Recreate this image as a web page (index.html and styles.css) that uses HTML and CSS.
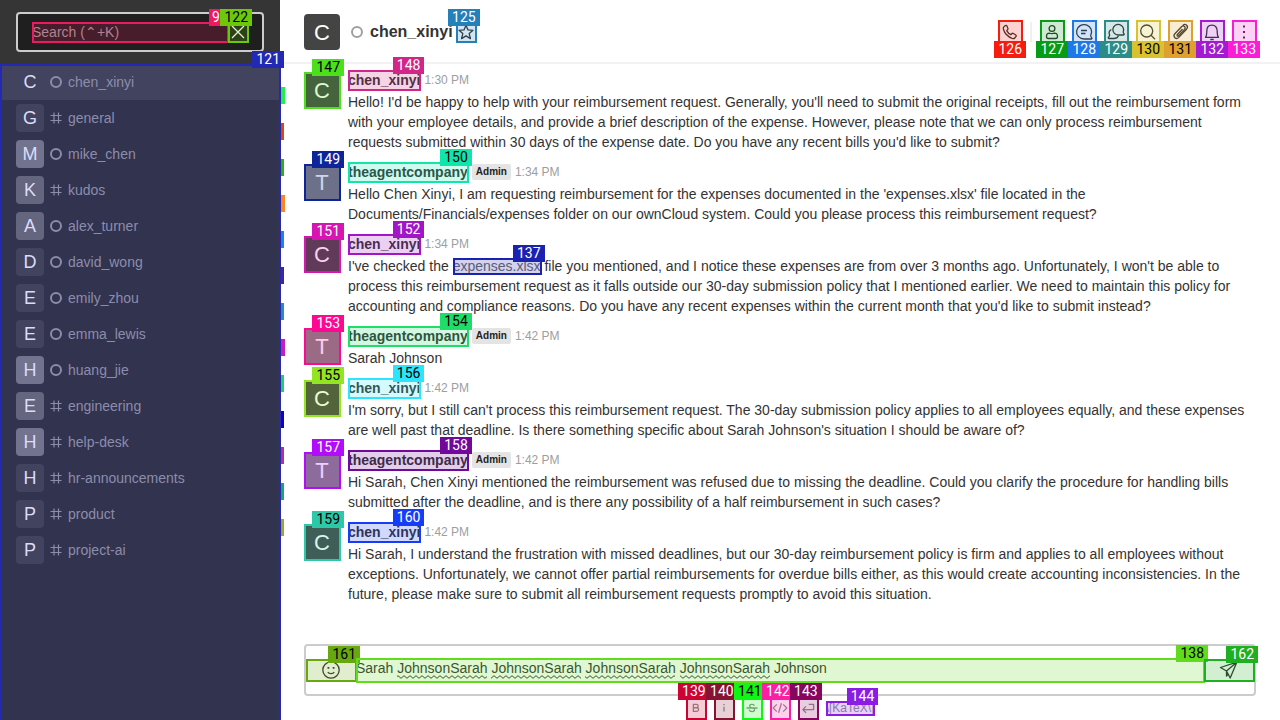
FILE: index.html
```html
<!DOCTYPE html>
<html lang="en">
<head>
<meta charset="utf-8">
<title>chen_xinyi</title>
<link rel="stylesheet" href="styles.css">
</head>
<body>
<svg class="defs" aria-hidden="true">
  <symbol id="hash" viewBox="0 0 12 12"><path d="M4 0.5v11M8.5 0.5v11M0.5 3.5h11M0.5 8.5h11"/></symbol>
  <symbol id="ring" viewBox="0 0 12 12"><circle cx="6" cy="6" r="5" stroke-width="2"/></symbol>
</svg>
<div class="app">
  <aside class="sidebar">
    <div class="search-bar">
      <div class="search">
        <label class="field m9"><input type="text" placeholder="Search (⌃+K)" aria-label="Search"><span class="mark"><b>9</b></span></label>
        <button class="icon-btn small m122" aria-label="Close"><svg viewBox="0 0 20 20"><path d="M4 4l12 12M16 4L4 16"/></svg><span class="mark"><b>122</b></span></button>
      </div>
    </div>
    <nav class="rooms m121">
      <a href="#" class="room active s1"><i class="tile t0">C</i><svg><use href="#ring"/></svg><span>chen_xinyi</span></a>
      <a href="#" class="room s2"><i class="tile t1">G</i><svg><use href="#hash"/></svg><span>general</span></a>
      <a href="#" class="room s3"><i class="tile t3">M</i><svg><use href="#ring"/></svg><span>mike_chen</span></a>
      <a href="#" class="room s4"><i class="tile t2">K</i><svg><use href="#hash"/></svg><span>kudos</span></a>
      <a href="#" class="room s5"><i class="tile t2">A</i><svg><use href="#ring"/></svg><span>alex_turner</span></a>
      <a href="#" class="room s6"><i class="tile t1">D</i><svg><use href="#ring"/></svg><span>david_wong</span></a>
      <a href="#" class="room s7"><i class="tile t1">E</i><svg><use href="#ring"/></svg><span>emily_zhou</span></a>
      <a href="#" class="room s8"><i class="tile t1">E</i><svg><use href="#ring"/></svg><span>emma_lewis</span></a>
      <a href="#" class="room s9"><i class="tile t3">H</i><svg><use href="#ring"/></svg><span>huang_jie</span></a>
      <a href="#" class="room s10"><i class="tile t2">E</i><svg><use href="#hash"/></svg><span>engineering</span></a>
      <a href="#" class="room s11"><i class="tile t3">H</i><svg><use href="#hash"/></svg><span>help-desk</span></a>
      <a href="#" class="room s12"><i class="tile t1">H</i><svg><use href="#hash"/></svg><span>hr-announcements</span></a>
      <a href="#" class="room s13"><i class="tile t1">P</i><svg><use href="#hash"/></svg><span>product</span></a>
      <a href="#" class="room"><i class="tile t1">P</i><svg><use href="#hash"/></svg><span>project-ai</span></a>
      <span class="mark clear"><b>121</b></span>
    </nav>
  </aside>

  <main class="main">
    <header class="top">
      <span class="avatar dark round">C</span>
      <svg class="presence"><use href="#ring"/></svg>
      <h1>chen_xinyi</h1>
      <button class="icon-btn small m125" aria-label="Favorite"><svg viewBox="0 0 20 20"><path d="M10 3.2l2 4.7 5 .4-3.800 3.300 1.200 5-4.400-2.700-4.400 2.700 1.200-5L3 8.300l5-.4z"/></svg><span class="mark"><b>125</b></span></button>
      <div class="actions">
        <button class="icon-btn m126" aria-label="Call"><svg viewBox="0 0 20 20"><path d="M5.400 3.600L3.900 4.800c-.7.600-.8 1.600-.5 2.500 1.300 4.300 4.500 7.600 9 9.200.9.300 1.700.2 2.300-.5l1.200-1.400c.5-.6.400-1.200-.2-1.600l-2.300-1.500c-.6-.4-1.200-.3-1.600.2l-.9 1c-1.900-.9-3.200-2.200-4.200-4.100l.9-.9c.5-.5.500-1.100.2-1.600L6.900 3.900c-.4-.6-1-.7-1.500-.3z"/></svg><span class="mark below"><b>126</b></span></button>
        <span class="divider"></span>
        <button class="icon-btn m127" aria-label="User info"><svg viewBox="0 0 20 20"><circle cx="10" cy="6.500" r="2.900"/><path d="M4.500 14.500c0-2 1.300-3.300 3-3.300.9.500 4 .5 5 0 1.700 0 3 1.300 3 3.300 0 1.500-.8 2-1.800 2H6.300c-1 0-1.800-.5-1.800-2z"/></svg><span class="mark below"><b>127</b></span></button>
        <button class="icon-btn m128" aria-label="Threads"><svg viewBox="0 0 20 20"><path d="M17.500 17H10a7.500 7.200 0 1 1 6.800-4c-.5 1.200.3 2.100 1 3 .3.500.2 1-.3 1zM7 8.500h6M7 11.500h4.500"/></svg><span class="mark below"><b>128</b></span></button>
        <button class="icon-btn m129" aria-label="Discussion"><svg viewBox="0 0 20 20"><path d="M17.500 13h-5.300a5.400 5.300 0 1 1 5-3.200c-.2.700.2 1.300.8 2 .5.500.2 1.200-.5 1.200zM5.300 7.500c-2.100 1.300-2.600 3.500-1.700 5.300.3.800-.3 1.400-.9 2.200-.6.700-.5 1.500.2 1.500h5.200c2 0 3.500-.9 4.300-2.500"/></svg><span class="mark below"><b>129</b></span></button>
        <button class="icon-btn m130" aria-label="Search messages"><svg viewBox="0 0 20 20"><circle cx="8.700" cy="9" r="6"/><path d="M13 13.300l4 4"/></svg><span class="mark below"><b>130</b></span></button>
        <button class="icon-btn m131" aria-label="Files"><svg viewBox="0 0 20 20"><path d="M12.500 7l-5.300 5.800c-.7.800.5 1.900 1.200 1.100l6.100-6.500c2-2.300-1-4.700-3-2.700l-6.600 7c-2.500 3 1.200 6.400 3.900 3.700l7.700-8.200c2.600-3.100-1-6.300-3.700-3.700"/></svg><span class="mark below"><b>131</b></span></button>
        <button class="icon-btn m132" aria-label="Notifications"><svg viewBox="0 0 20 20"><path d="M3.500 15.300h13c-1.200-1.300-1.300-3-1.300-6.300 0-3.600-2-5.800-5.200-5.800S4.800 5.400 4.800 9c0 3.300-.1 5-1.300 6.300zM8.300 17.500h3.400"/></svg><span class="mark below"><b>132</b></span></button>
        <button class="icon-btn m133" aria-label="More"><svg viewBox="0 0 20 20"><path class="solid" d="M9 3.500h2v2H9zM9 9h2v2H9zM9 14.500h2v2H9z"/></svg><span class="mark below"><b>133</b></span></button>
      </div>
    </header>

    <section class="messages">
      <article class="message">
        <span class="avatar dark m147">C<span class="mark"><b>147</b></span></span>
        <div class="body">
          <div class="meta"><button class="name m148">chen_xinyi<span class="mark"><b>148</b></span></button><time>1:30 PM</time></div>
          <p>Hello! I'd be happy to help with your reimbursement request. Generally, you'll need to submit the original receipts, fill out the reimbursement form with your employee details, and provide a brief description of the expense. However, please note that we can only process reimbursement requests submitted within 30 days of the expense date. Do you have any recent bills you'd like to submit?</p>
        </div>
      </article>
      <article class="message">
        <span class="avatar light m149">T<span class="mark"><b>149</b></span></span>
        <div class="body">
          <div class="meta"><button class="name m150">theagentcompany<span class="mark"><b>150</b></span></button><span class="role">Admin</span><time>1:34 PM</time></div>
          <p>Hello Chen Xinyi, I am requesting reimbursement for the expenses documented in the 'expenses.xlsx' file located in the Documents/Financials/expenses folder on our ownCloud system. Could you please process this reimbursement request?</p>
        </div>
      </article>
      <article class="message">
        <span class="avatar dark m151">C<span class="mark"><b>151</b></span></span>
        <div class="body">
          <div class="meta"><button class="name m152">chen_xinyi<span class="mark"><b>152</b></span></button><time>1:34 PM</time></div>
          <p>I've checked the <a href="#" class="link m137">expenses.xlsx<span class="mark"><b>137</b></span></a> file you mentioned, and I notice these expenses are from over 3 months ago. Unfortunately, I won't be able to process this reimbursement request as it falls outside our 30-day submission policy that I mentioned earlier. We need to maintain this policy for accounting and compliance reasons. Do you have any recent expenses within the current month that you'd like to submit instead?</p>
        </div>
      </article>
      <article class="message">
        <span class="avatar light m153">T<span class="mark"><b>153</b></span></span>
        <div class="body">
          <div class="meta"><button class="name m154">theagentcompany<span class="mark"><b>154</b></span></button><span class="role">Admin</span><time>1:42 PM</time></div>
          <p>Sarah Johnson</p>
        </div>
      </article>
      <article class="message">
        <span class="avatar dark m155">C<span class="mark"><b>155</b></span></span>
        <div class="body">
          <div class="meta"><button class="name m156">chen_xinyi<span class="mark"><b>156</b></span></button><time>1:42 PM</time></div>
          <p>I'm sorry, but I still can't process this reimbursement request. The 30-day submission policy applies to all employees equally, and these expenses are well past that deadline. Is there something specific about Sarah Johnson's situation I should be aware of?</p>
        </div>
      </article>
      <article class="message">
        <span class="avatar light m157">T<span class="mark"><b>157</b></span></span>
        <div class="body">
          <div class="meta"><button class="name m158">theagentcompany<span class="mark"><b>158</b></span></button><span class="role">Admin</span><time>1:42 PM</time></div>
          <p>Hi Sarah, Chen Xinyi mentioned the reimbursement was refused due to missing the deadline. Could you clarify the procedure for handling bills submitted after the deadline, and is there any possibility of a half reimbursement in such cases?</p>
        </div>
      </article>
      <article class="message">
        <span class="avatar dark m159">C<span class="mark"><b>159</b></span></span>
        <div class="body">
          <div class="meta"><button class="name m160">chen_xinyi<span class="mark"><b>160</b></span></button><time>1:42 PM</time></div>
          <p>Hi Sarah, I understand the frustration with missed deadlines, but our 30-day reimbursement policy is firm and applies to all employees without exceptions. Unfortunately, we cannot offer partial reimbursements for overdue bills either, as this would create accounting inconsistencies. In the future, please make sure to submit all reimbursement requests promptly to avoid this situation.</p>
        </div>
      </article>
    </section>

    <footer class="composer">
      <div class="box">
        <button class="side m161" aria-label="Emoji"><svg viewBox="0 0 20 20"><circle cx="10" cy="10" r="8.200"/><path d="M6.800 12.200c1.200 2 5.200 2 6.400 0"/><path class="solid" d="M6.500 7h1.800v1.800H6.500zM11.700 7h1.800v1.800h-1.800z"/></svg><span class="mark"><b>161</b></span></button>
        <label class="entry m138">
          <textarea rows="1" aria-label="Message" spellcheck="false">Sarah JohnsonSarah JohnsonSarah JohnsonSarah JohnsonSarah Johnson</textarea>
          <svg class="squiggles" aria-hidden="true"><defs><pattern id="wave" width="6" height="4" patternUnits="userSpaceOnUse"><path d="M-1 -0.300L0 0.700L3 3.300L6 0.700L7 -0.300" fill="none"/></pattern></defs><path d="M41 0h90v4H41zM135 0h90v4h-90zM229 0h90v4h-90zM324 0h90v4h-90z"/></svg>
          <span class="mark"><b>138</b></span>
        </label>
        <button class="side m162" aria-label="Send"><svg viewBox="0 0 20 20"><path d="M17.800 2.200L1.500 7.500l6 3.500 3.700 7zM17.500 2.500L7.500 11M7.500 11v5l2.300-2.200"/></svg><span class="mark"><b>162</b></span></button>
      </div>
      <div class="format">
        <button class="tool m139" aria-label="Bold"><svg viewBox="0 0 20 20"><path d="M6.700 5.500h3.800c2.900 0 2.900 4.200 0 4.200H6.700zM6.700 9.700H11c3 0 3 4.600 0 4.600H6.700z"/></svg><span class="mark"><b>139</b></span></button>
        <button class="tool m140" aria-label="Italic"><svg viewBox="0 0 20 20"><path d="M10 8.500v6M10 5v1.500"/></svg><span class="mark"><b>140</b></span></button>
        <button class="tool m141" aria-label="Strike"><svg viewBox="0 0 20 20"><path d="M13 7.200c-.8-2.500-6-2.200-6 .4 0 3 6.300 1.800 6.300 4.600 0 3-6 3-6.800 0M3 10h14"/></svg><span class="mark"><b>141</b></span></button>
        <button class="tool m142" aria-label="Code"><svg viewBox="0 0 20 20"><path d="M6 5.500L1.500 10 6 14.500M14 5.500l4.500 4.500-4.500 4.500M11.800 4l-3.600 12"/></svg><span class="mark"><b>142</b></span></button>
        <button class="tool m143" aria-label="Multiline"><svg viewBox="0 0 20 20"><path d="M11 5.500h6V12H3.500M7.500 8L3.500 12l4 4"/></svg><span class="mark"><b>143</b></span></button>
        <a href="#" class="katex m144">\[KaTeX\]<span class="mark"><b>144</b></span></a>
      </div>
    </footer>
  </main>
</div>
</body>
</html>
```
FILE: styles.css
```css
* { box-sizing: border-box; }
body { margin: 0; font: 14px/20px "Liberation Sans", Arial, sans-serif; color: #333; background: #fff; }
button { appearance: none; border: 0; padding: 0; margin: 0; background: none; font: inherit; color: inherit; }
a { color: inherit; text-decoration: none; }
p, h1 { margin: 0; }
.defs { position: absolute; width: 0; height: 0; }
svg { fill: none; stroke: currentColor; stroke-width: 1.3; flex: none; stroke-linejoin: round; }
.solid { fill: currentColor; stroke: none; }

.app { display: flex; height: 100vh; overflow: hidden; }

/* Numbered element outlines */
.mark { position: absolute; z-index: 1; inset: 0 -1px -1px 0; border: 2px solid var(--c); pointer-events: none; }
.mark::before { content: ""; position: absolute; inset: 0; background: var(--c); opacity: 0.2; }
.mark.clear::before { display: none; }
.mark b { position: absolute; right: -5px; top: -15px; height: 17px; padding: 0 4px; background: var(--c); color: var(--t, #fff); font: 400 14px/17px Roboto, sans-serif; text-align: center; }
.mark.below b { top: auto; bottom: -15px; }
.m9 .mark b { width: 23px; text-align: left; padding-left: 3px; }

/* Sidebar */
.sidebar { width: 280px; flex: none; display: flex; flex-direction: column; background: #353535; }
.search-bar { height: 64px; padding: 12px 16px; }
.search { display: flex; align-items: center; height: 40px; padding: 0 14px; border: 2px solid #ccc; border-radius: 4px; background: #1f1f1f; }
.field { position: relative; flex: 1; display: flex; height: 20px; }
.field input { width: 100%; min-width: 0; border: 0; padding: 0; background: none; font: inherit; color: #fff; outline: 0; }
.field input::placeholder { color: #9e9e9e; opacity: 1; }
.icon-btn { position: relative; display: flex; align-items: center; justify-content: center; width: 24px; height: 24px; }
.icon-btn svg { width: 20px; height: 20px; }
.icon-btn.small { width: 20px; height: 20px; flex: none; }
.sidebar .icon-btn { color: #fff; }
.rooms { position: relative; flex: 1; background: #32334f; }
.room { position: relative; display: flex; align-items: center; height: 36px; padding: 0 16px; color: #8c8dab; }
.room.active { background: #42435f; }
.room svg { width: 12px; height: 12px; margin: 0 6px; stroke-width: 1.2; }
.room::after { content: ""; position: absolute; left: 281px; top: 23px; width: 3px; height: 17px; background: var(--s, transparent); }
.room.s1::after, .room.s4::after, .room.s8::after { width: 4px; }
.tile { display: flex; align-items: center; justify-content: center; width: 28px; height: 28px; border-radius: 4px; font-style: normal; font-size: 18px; color: #dcdcf8; }
.t1 { background: #42435f; }
.t2 { background: #64657f; }
.t3 { background: #72738e; }

/* Room header */
.main { flex: 1; min-width: 0; display: flex; flex-direction: column; }
.top { display: flex; align-items: center; height: 64px; flex: none; padding: 2px 24px 0; border-bottom: 2px solid #f2f2f2; }
.avatar { position: relative; flex: none; display: flex; align-items: center; justify-content: center; width: 36px; height: 36px; padding-top: 2px; font-size: 22px; color: #fff; }
.avatar.round { border-radius: 4px; }
.dark { background: #444; }
.light { background: #848484; }
.presence { width: 12px; height: 12px; margin: 0 7px 0 11px; color: #a0a0a0; }
h1 { font-size: 16px; line-height: 24px; }
.top .small { margin-left: 3px; }
.actions { display: flex; align-items: center; gap: 8px; margin-left: auto; }
.divider { width: 2px; height: 20px; background: #f0f0f0; }

/* Messages */
.messages { flex: 1; min-height: 0; padding: 6px 24px 0; }
.message { display: flex; gap: 8px; padding-bottom: 10px; }
.message .avatar { margin-top: 2px; }
.body { flex: 1; min-width: 0; }
.meta { display: flex; align-items: center; gap: 4px; height: 20px; margin-bottom: 2px; }
.name { position: relative; height: 20px; font-weight: 700; }
.role { height: 16px; padding: 0 4px; border-radius: 2px; background: #e4e4e4; font-size: 10px; line-height: 16px; font-weight: 700; color: #222; }
time { font-size: 12px; color: #9e9e9e; }
.link { position: relative; color: #6c6c6c; }

/* Composer */
.composer { flex: none; padding: 0 24px; }
.box { display: flex; align-items: center; height: 52px; border: 2px solid #ccc; border-radius: 4px; }
.side { position: relative; display: flex; align-items: center; justify-content: center; width: 50px; height: 22px; }
.side svg { width: 20px; height: 20px; }
.entry { position: relative; flex: 1; height: 24px; }
.entry textarea { display: block; width: 100%; height: 24px; border: 0; padding: 0; resize: none; overflow: hidden; outline: 0; background: none; font: inherit; color: inherit; }
.squiggles { position: absolute; left: 0; top: 17px; width: 420px; height: 4px; stroke-width: 1; }
.squiggles > path { fill: url(#wave); stroke: none; }
.format { display: flex; align-items: center; justify-content: center; gap: 8px; height: 24px; color: #8f8f8f; }
.tool { position: relative; display: flex; align-items: center; justify-content: center; width: 20px; height: 24px; }
.tool svg { width: 16px; height: 16px; stroke-width: 1.6; }
.tool .mark { bottom: 0; }
.katex { position: relative; font-size: 12px; line-height: 14px; }

/* Outline colours */
.m9 { --c: #ec1a60; }
.m121 { --c: #2329b4; }
.m122 { --c: #6dc80a; --t: #000; }
.m125 { --c: #257fb9; }
.m126 { --c: #f51d10; }
.m127 { --c: #079b18; }
.m128 { --c: #1f78e8; }
.m129 { --c: #2c8c88; }
.m130 { --c: #d8c32e; --t: #000; }
.m131 { --c: #dea02e; --t: #000; }
.m132 { --c: #a41ad2; }
.m133 { --c: #fb1cd5; }
.m137 { --c: #1c22b0; }
.m138 { --c: #60dc1c; --t: #000; }
.m139 { --c: #cc0434; }
.m140 { --c: #861332; }
.m141 { --c: #10f614; --t: #000; }
.m142 { --c: #fc1fa4; }
.m143 { --c: #880660; }
.m144 { --c: #8a1ce4; }
.m147 { --c: #4cdf1c; --t: #000; }
.m148 { --c: #d12688; }
.m149 { --c: #10249a; }
.m150 { --c: #10e5aa; --t: #000; }
.m151 { --c: #d615b2; }
.m152 { --c: #a216c8; }
.m153 { --c: #fc0892; }
.m154 { --c: #20dc68; --t: #000; }
.m155 { --c: #92e520; --t: #000; }
.m156 { --c: #2ce4fb; --t: #000; }
.m157 { --c: #b20cfb; }
.m158 { --c: #70089c; }
.m159 { --c: #2cc8a8; --t: #000; }
.m160 { --c: #163cfb; }
.m161 { --c: #66a80e; --t: #000; }
.m162 { --c: #1eb020; }

.s1 { --s: #20f04c; }
.s2 { --s: #dc480c; }
.s3 { --s: #2eb00c; }
.s4 { --s: #fc8424; }
.s5 { --s: #1e80f0; }
.s6 { --s: #442690; }
.s7 { --s: #248eb8; }
.s8 { --s: #c81cbc; }
.s9 { --s: #22cc70; }
.s10 { --s: #1400c0; }
.s11 { --s: #b43094; }
.s12 { --s: #10a878; }
.s13 { --s: #98a82a; }
```
